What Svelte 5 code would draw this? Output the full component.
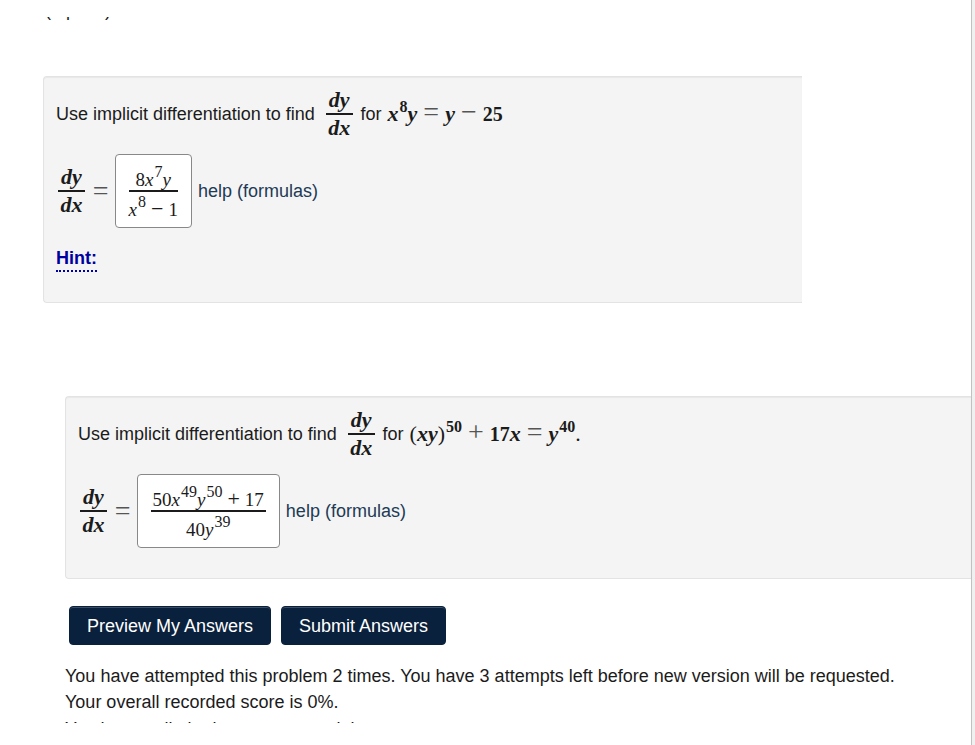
<script lang="ts">
  const attempts = 2;
  const remaining = 3;
  const score = 0;
</script>

<svelte:head>
  <title>Implicit differentiation</title>
</svelte:head>

{#snippet dydx()}
  <span class="frac">
    <span class="num"><i>dy</i></span>
    <span class="den"><i>dx</i></span>
  </span>
{/snippet}

<div class="window">
  <main>
    <div class="points"><span>(1 point)</span></div>

    <section class="problem first">
      <div class="prompt">
        <span>Use implicit differentiation to find</span>
        {@render dydx()}
        <span>for</span>
        <span class="math"><i>x</i><sup>8</sup><i>y</i><b class="op">=</b><i>y</i><b class="op">−</b>25</span>
      </div>
      <div class="answer">
        {@render dydx()}
        <span class="op eq">=</span>
        <div class="field" role="textbox" tabindex="0" aria-label="answer 1">
          <span class="frac">
            <span class="num">8<i>x</i><sup>7</sup><i>y</i></span>
            <span class="den"><i>x</i><sup>8</sup><b class="op">−</b>1</span>
          </span>
        </div>
        <a class="help" href="#formulas">help (formulas)</a>
      </div>
      <div class="hint"><a href="#hint">Hint:</a></div>
    </section>

    <section class="problem second">
      <div class="prompt">
        <span>Use implicit differentiation to find</span>
        {@render dydx()}
        <span>for</span>
        <span class="math"><em>(</em><i>xy</i><em>)</em><sup>50</sup><b class="op">+</b>17<i>x</i><b class="op">=</b><i>y</i><sup>40</sup><em>.</em></span>
      </div>
      <div class="answer">
        {@render dydx()}
        <span class="op eq">=</span>
        <div class="field" role="textbox" tabindex="0" aria-label="answer 2">
          <span class="frac">
            <span class="num">50<i>x</i><sup>49</sup><i>y</i><sup>50</sup><b class="op">+</b>17</span>
            <span class="den">40<i>y</i><sup>39</sup></span>
          </span>
        </div>
        <a class="help" href="#formulas">help (formulas)</a>
      </div>
    </section>

    <div class="buttons">
      <button type="button">Preview My Answers</button>
      <button type="button">Submit Answers</button>
    </div>

    <div class="status">
      <p>You have attempted this problem {attempts} times. You have {remaining} attempts left before new version will be requested.</p>
      <p>Your overall recorded score is {score}%.</p>
      <p class="cut">You have unlimited attempts remaining.</p>
    </div>
  </main>
</div>

<style>
  :global(body) {
    background: #fff;
  }

  .window {
    display: flow-root;
    box-sizing: border-box;
    min-height: 100vh;
    border-right: 3px solid #f0f0f0;
    font-family: "Liberation Sans", Arial, sans-serif;
    font-size: 18px;
    line-height: 26px;
    color: #1b1b1b;
  }

  main {
    box-sizing: border-box;
    min-height: 100vh;
    padding-top: 17px;
    border-right: 1px solid #c1c1c1;
  }

  /* only the last rows of the scrolled-off line show */
  .points {
    display: flex;
    align-items: flex-end;
    height: 3px;
    margin-left: 45px;
    overflow: hidden;
    line-height: 20px;
  }

  .problem {
    padding: 12px 12px 30px;
    background: #f4f4f4;
    border: 1px solid #e3e3e3;
    border-right: 0;
    border-radius: 4px 0 0 4px;
    box-shadow: inset 0 1px 1px rgba(0, 0, 0, 0.05);
  }

  .first {
    margin: 56px 169px 0 43px;
  }

  .second {
    margin: 93px 0 0 65px;
  }

  .prompt,
  .answer {
    display: flex;
    align-items: center;
    white-space: nowrap;
  }

  .prompt {
    gap: 8px;
  }

  .prompt .frac {
    margin-left: 3px;
  }

  .prompt .math {
    margin-left: -2px;
  }

  .answer {
    margin-top: 15px;
    padding-left: 2px;
  }

  .frac {
    display: inline-flex;
    flex-direction: column;
    text-align: center;
    font-family: "Liberation Serif", "Times New Roman", serif;
    font-size: 22px;
    font-weight: bold;
    line-height: 22px;
  }

  .num {
    padding: 0 3px 2px;
    border-bottom: 2px solid #1b1b1b;
  }

  .den {
    padding-top: 2px;
  }

  .math {
    font-family: "Liberation Serif", "Times New Roman", serif;
    font-size: 20px;
    font-weight: bold;
  }

  .math i,
  .math em {
    font-size: 22px;
    line-height: 0;
  }

  .math em {
    font-style: normal;
    font-weight: normal;
  }

  sup {
    position: relative;
    top: -9px;
    margin-left: 1px;
    font-size: 16px;
    line-height: 0;
    vertical-align: baseline;
  }

  .op {
    margin: 0 6px;
    font-family: "Liberation Serif", "Times New Roman", serif;
    font-size: 28px;
    font-weight: normal;
    line-height: 0;
    color: #555;
  }

  .eq {
    margin: 0 6px 0 8px;
  }

  .field {
    display: flex;
    align-items: center;
    box-sizing: border-box;
    height: 74px;
    padding: 0 13px;
    background: #fff;
    border: 1px solid #888;
    border-radius: 4px;
  }

  .field .frac {
    font-size: 19px;
    font-weight: normal;
    line-height: 20px;
  }

  .field .num {
    padding: 8px 2px 0;
  }

  .field .den {
    padding-top: 8px;
  }

  .field .op {
    margin: 0 5px;
    font-size: 22px;
    color: #1b1b1b;
  }

  .help {
    margin-left: 6px;
    color: #213a56;
    text-decoration: none;
  }

  .hint {
    display: flex;
    margin-top: 18px;
  }

  .hint a {
    line-height: 24px;
    font-weight: bold;
    color: #0000a0;
    text-decoration: none;
    border-bottom: 2px dotted #0000a0;
  }

  .buttons {
    display: flex;
    gap: 10px;
    margin: 27px 0 0 69px;
  }

  button {
    height: 39px;
    padding: 0 17px;
    font: inherit;
    color: #fff;
    background: #0a213d;
    border: 1px solid #0a213d;
    border-radius: 4px;
    box-shadow: inset 0 1px 0 rgba(255, 255, 255, 0.2);
    cursor: pointer;
  }

  .status {
    margin: 18px 0 0 65px;
  }

  .status p {
    margin: 0;
  }

  .status .cut {
    height: 8px;
    overflow: hidden;
    line-height: 28px;
  }
</style>
